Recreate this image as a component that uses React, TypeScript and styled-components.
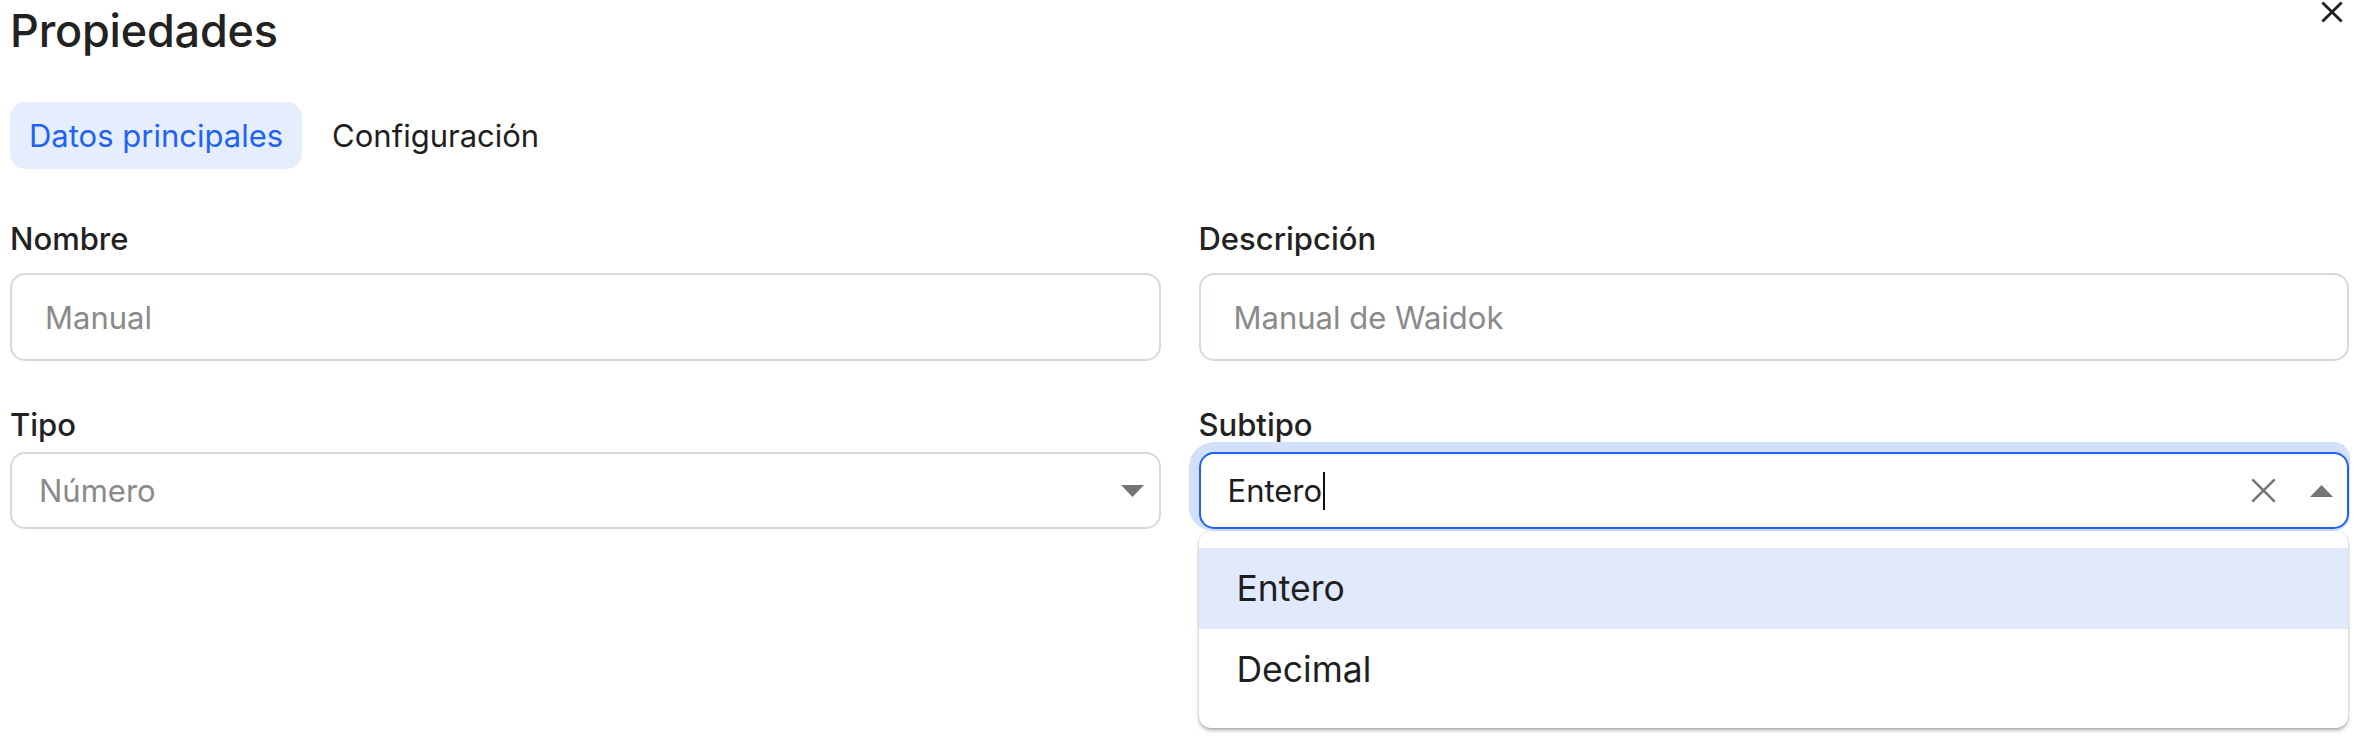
import React from "react";
import styled, { createGlobalStyle } from "styled-components";

const GlobalStyle = createGlobalStyle`
  html, body {
    margin: 0;
    padding: 0;
    background: #ffffff;
  }
  body {
    font-family: Inter, "Noto Sans", "Liberation Sans", sans-serif;
    color: #1f1f1f;
    -webkit-font-smoothing: antialiased;
  }
  * { box-sizing: border-box; }
`;

const Panel = styled.div`
  width: 2378px;
  height: 746px;
  padding: 3px 29px 0 10px;
  overflow: hidden;
`;

const Header = styled.header`
  display: flex;
  justify-content: space-between;
  align-items: flex-start;
`;

const Title = styled.h1`
  margin: 0;
  font-size: 45px;
  line-height: 56px;
  font-weight: 500;
  color: #222222;
  letter-spacing: -0.2px;
`;

const CloseButton = styled.button`
  display: flex;
  align-items: center;
  justify-content: center;
  width: 22px;
  height: 22px;
  margin: -2px 6px 0 0;
  padding: 0;
  border: none;
  background: transparent;
  color: #1f1f1f;
  cursor: pointer;
`;

const Tabs = styled.nav`
  display: flex;
  gap: 11px;
  margin-top: 43px;
`;

const Tab = styled.button<{ $active?: boolean }>`
  height: 67px;
  padding: 0 19px;
  border: none;
  border-radius: 15px;
  font-family: inherit;
  font-size: 31px;
  font-weight: 400;
  background: ${(p) => (p.$active ? "#e6eefd" : "transparent")};
  color: ${(p) => (p.$active ? "#1e63f6" : "#1f1f1f")};
  cursor: pointer;
`;

const FormGrid = styled.div`
  display: grid;
  grid-template-columns: 1fr 1fr;
  column-gap: 38px;
  row-gap: 45px;
  margin-top: 51px;
`;

const Field = styled.div`
  position: relative;
  display: flex;
  flex-direction: column;
`;

const Label = styled.label<{ $gap: number }>`
  font-size: 31px;
  line-height: 38px;
  font-weight: 500;
  color: #222222;
  margin-bottom: ${(p) => p.$gap}px;
`;

const TextBox = styled.div`
  display: flex;
  align-items: center;
  height: 88px;
  padding: 0 33px;
  border: 2px solid #dcd8d3;
  border-radius: 15px;
  font-size: 31px;
  color: #8a8a8a;
`;

const SelectBox = styled.div<{ $focused?: boolean }>`
  display: flex;
  align-items: center;
  height: 77px;
  padding: 0 ${(p) => (p.$focused ? 14 : 15)}px 0 27px;
  border: 2px solid ${(p) => (p.$focused ? "#1f60f5" : "#dcd8d3")};
  border-radius: 15px;
  font-size: 31px;
  color: ${(p) => (p.$focused ? "#1c1c1c" : "#8a8a8a")};
  box-shadow: ${(p) => (p.$focused ? "0 0 0 10px #d2e0fb" : "none")};
  clip-path: ${(p) =>
    p.$focused ? "inset(-10px -1px -2px -10px round 25px 16px 16px 25px)" : "none"};
`;

const Value = styled.span`
  flex: 1;
  display: flex;
  align-items: center;
`;

const Caret = styled.span`
  display: inline-block;
  width: 2px;
  height: 38px;
  margin-left: 1px;
  background: #111111;
`;

const IconSlot = styled.span<{ $gap?: number }>`
  display: flex;
  align-items: center;
  justify-content: center;
  color: #757575;
  margin-left: ${(p) => p.$gap ?? 0}px;
`;

const Menu = styled.ul`
  position: absolute;
  top: calc(100% + 2px);
  left: 0;
  right: 1px;
  margin: 0;
  padding: 17px 0 18px;
  list-style: none;
  background: #ffffff;
  border-radius: 12px;
  box-shadow: 0 3px 5px -1px rgba(0, 0, 0, 0.3), 0 1px 3px rgba(0, 0, 0, 0.14),
    0 0 1px rgba(0, 0, 0, 0.14);
  z-index: 10;
`;

const Option = styled.li<{ $active?: boolean }>`
  display: flex;
  align-items: center;
  height: 81px;
  padding-left: 38px;
  font-size: 35.5px;
  color: #1f1f1f;
  background: ${(p) => (p.$active ? "#e1eafc" : "transparent")};
`;

const CloseIcon = ({ size, stroke }: { size: number; stroke: number }) => (
  <svg width={size} height={size} viewBox={`0 0 ${size} ${size}`} fill="none">
    <path
      d={`M${stroke / 2} ${stroke / 2} L${size - stroke / 2} ${size - stroke / 2} M${size - stroke / 2} ${stroke / 2} L${stroke / 2} ${size - stroke / 2}`}
      stroke="currentColor"
      strokeWidth={stroke}
    />
  </svg>
);

const Triangle = ({ up }: { up?: boolean }) => (
  <svg width="23" height="12" viewBox="0 0 23 12">
    <polygon points={up ? "0,12 23,12 11.5,0" : "0,0 23,0 11.5,12"} fill="currentColor" />
  </svg>
);

export default function App() {
  return (
    <>
      <GlobalStyle />
      <Panel>
        <Header>
          <Title>Propiedades</Title>
          <CloseButton aria-label="Cerrar">
            <CloseIcon size={22} stroke={2.8} />
          </CloseButton>
        </Header>

        <Tabs>
          <Tab $active>Datos principales</Tab>
          <Tab>Configuración</Tab>
        </Tabs>

        <FormGrid>
          <Field>
            <Label $gap={15}>Nombre</Label>
            <TextBox>Manual</TextBox>
          </Field>
          <Field>
            <Label $gap={15}>Descripción</Label>
            <TextBox>Manual de Waidok</TextBox>
          </Field>
          <Field>
            <Label $gap={8}>Tipo</Label>
            <SelectBox>
              <Value>Número</Value>
              <IconSlot>
                <Triangle />
              </IconSlot>
            </SelectBox>
          </Field>
          <Field>
            <Label $gap={8}>Subtipo</Label>
            <SelectBox $focused>
              <Value>
                Entero
                <Caret />
              </Value>
              <IconSlot>
                <CloseIcon size={25} stroke={2.6} />
              </IconSlot>
              <IconSlot $gap={34}>
                <Triangle up />
              </IconSlot>
            </SelectBox>
            <Menu>
              <Option $active>Entero</Option>
              <Option>Decimal</Option>
            </Menu>
          </Field>
        </FormGrid>
      </Panel>
    </>
  );
}
